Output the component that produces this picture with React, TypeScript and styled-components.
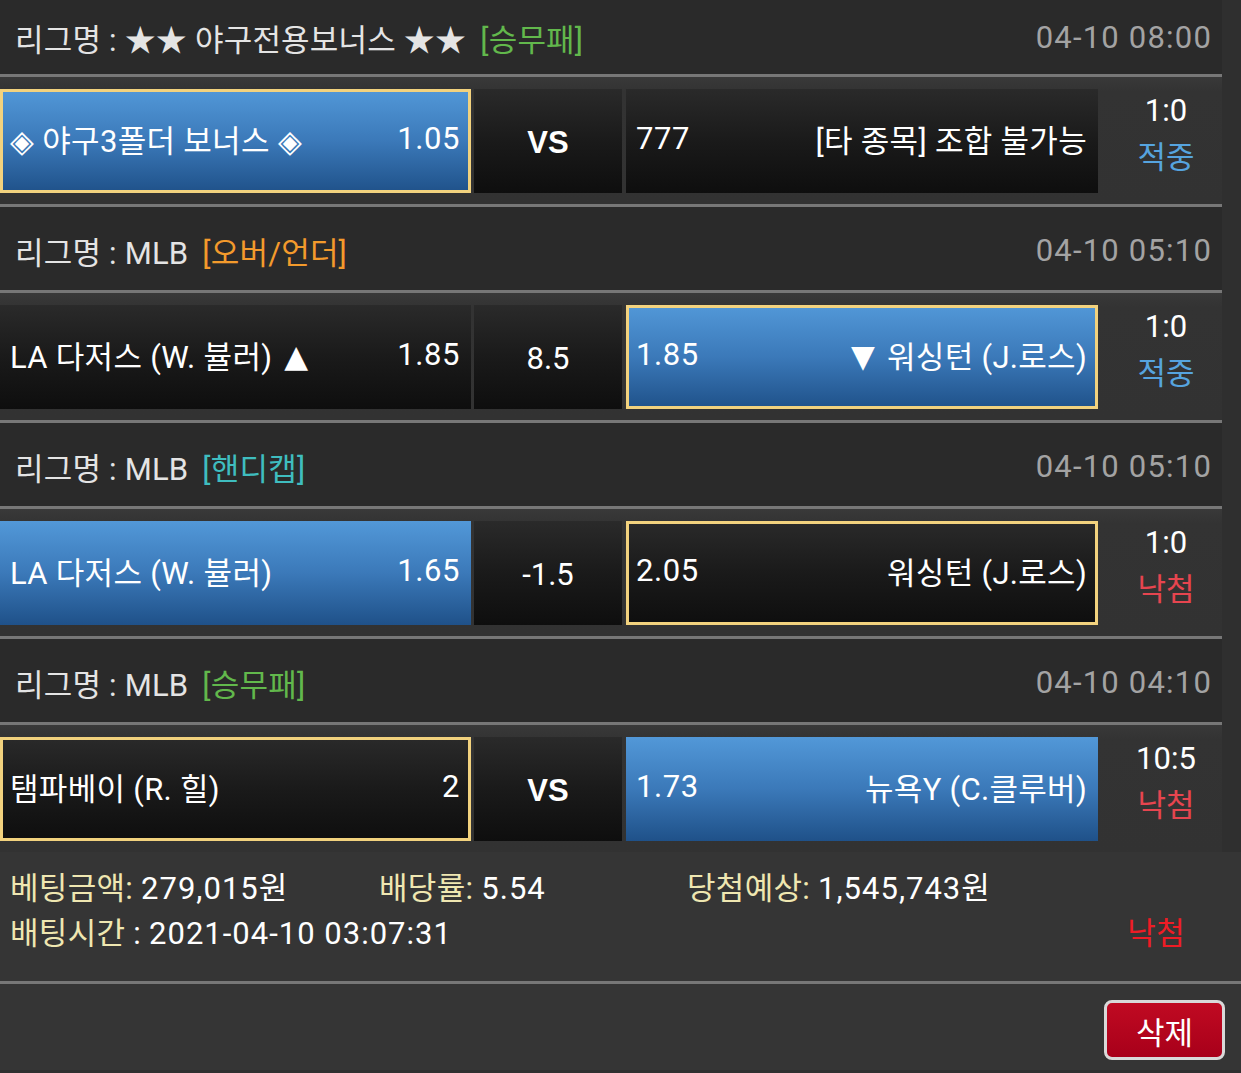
import React from "react";
import styled, { createGlobalStyle } from "styled-components";

const GlobalStyle = createGlobalStyle`
  html, body {
    margin: 0;
    padding: 0;
    background: #2f2f2f;
  }
  body {
    font-family: Roboto, "Noto Sans CJK KR", sans-serif;
    color: #ffffff;
    -webkit-font-smoothing: antialiased;
  }
`;

const Page = styled.div`
  width: 1241px;
  min-height: 1073px;
  background: #2f2f2f;
  overflow: hidden;
`;

const Board = styled.div`
  width: 1222px;
`;

const LeagueHeader = styled.div<{ $compact?: boolean }>`
  box-sizing: border-box;
  height: ${(p) => (p.$compact ? 77 : 86)}px;
  padding: ${(p) => (p.$compact ? "0" : "3px")} 10px 0 15px;
  display: flex;
  align-items: center;
  justify-content: space-between;
  background: #2a2a2a;
  border-bottom: 3px solid #777777;
  font-size: 31px;
  letter-spacing: 0.2px;
`;

const LeagueName = styled.div`
  color: #e4e4e4;
  white-space: nowrap;
`;

const Tag = styled.span<{ $color: string }>`
  color: ${(p) => p.$color};
  margin-left: 14px;
`;

const GameTime = styled.div`
  color: #a3a3a3;
  letter-spacing: 1.2px;
`;

const MatchRow = styled.div<{ $last?: boolean }>`
  box-sizing: border-box;
  height: ${(p) => (p.$last ? 127 : 130)}px;
  padding: 12px 0 11px;
  display: flex;
  background: linear-gradient(#393939 0px, #333333 14px, #323232);
  border-bottom: ${(p) => (p.$last ? "none" : "3px solid #777777")};
`;

const Cell = styled.div<{ $win?: boolean; $picked?: boolean }>`
  box-sizing: border-box;
  width: 471px;
  height: 104px;
  padding: 0 8px 5px 7px;
  display: flex;
  align-items: center;
  justify-content: space-between;
  border: 3px solid ${(p) => (p.$picked ? "#f2d27e" : "transparent")};
  background: ${(p) =>
    p.$win
      ? "linear-gradient(#5298d8, #3b79b9 50%, #1f5189)"
      : "linear-gradient(#2a2a2a, #1a1a1a 50%, #0e0e0e)"};
  background-origin: border-box;
  font-size: 31px;
  letter-spacing: 0.3px;
  white-space: nowrap;
`;

const AwayCell = styled(Cell)`
  width: 472px;
  margin-left: 4px;
`;

const Odds = styled.span`
  letter-spacing: 0.6px;
`;

const Arrow = styled.span`
  font-family: "DejaVu Sans", sans-serif;
  font-size: 31px;
  margin: 0 12px;
  position: relative;
  top: -1px;
`;

const MidCell = styled.div<{ $bold?: boolean }>`
  width: 148px;
  height: 104px;
  margin-left: 3px;
  display: flex;
  align-items: center;
  justify-content: center;
  padding-top: 3px;
  box-sizing: border-box;
  background: linear-gradient(#2a2a2a, #1a1a1a 50%, #0e0e0e);
  font-size: 31px;
  font-weight: ${(p) => (p.$bold ? 700 : 400)};
  font-family: ${(p) => (p.$bold ? '"Liberation Sans", Arial, sans-serif' : "inherit")};
`;

const ScoreBox = styled.div`
  width: 112px;
  margin-left: 12px;
  padding-bottom: 15px;
  display: flex;
  flex-direction: column;
  align-items: center;
  justify-content: center;
  font-size: 31px;
  line-height: 47px;
`;

const Result = styled.div<{ $hit: boolean }>`
  color: ${(p) => (p.$hit ? "#56a4df" : "#e6454f")};
`;

const Summary = styled.div`
  background: #353535;
  padding: 14px 10px 25px;
  border-bottom: 3px solid #777777;
  display: grid;
  grid-template-columns: 369px 308px 1fr;
  font-size: 31px;
  line-height: 45px;
  letter-spacing: 0.3px;
  white-space: nowrap;
`;

const Label = styled.span`
  color: #efe7b1;
`;

const Value = styled.span`
  letter-spacing: 1px;
`;

const TimeLine = styled.div`
  grid-column: 1 / 3;
`;

const LostMark = styled.div`
  justify-self: end;
  margin-right: 46px;
  color: #ee1c25;
`;

const Actions = styled.div`
  background: #353535;
  height: 86px;
  padding: 16px 16px 0 0;
  box-sizing: border-box;
  display: flex;
  justify-content: flex-end;
  align-items: flex-start;
`;

const DeleteButton = styled.button`
  width: 121px;
  height: 60px;
  box-sizing: border-box;
  border: 3px solid #d9d9d9;
  border-radius: 8px;
  background: linear-gradient(#c00a22, #a8001a);
  color: #ffffff;
  font-family: Roboto, "Noto Sans CJK KR", sans-serif;
  font-size: 31px;
  padding: 0;
  cursor: pointer;
`;

interface Side {
  name: string;
  odds: string;
  arrow?: "▲" | "▼";
  win?: boolean;
  picked?: boolean;
}

interface Game {
  league: string;
  tag: string;
  tagColor: string;
  time: string;
  home: Side;
  mid: string;
  midBold?: boolean;
  away: Side;
  score: string;
  hit: boolean;
}

const games: Game[] = [
  {
    league: "리그명 : ★★ 야구전용보너스 ★★",
    tag: "[승무패]",
    tagColor: "#62b84c",
    time: "04-10 08:00",
    home: { name: "◈ 야구3폴더 보너스 ◈", odds: "1.05", win: true, picked: true },
    mid: "VS",
    midBold: true,
    away: { name: "[타 종목] 조합 불가능", odds: "777" },
    score: "1:0",
    hit: true,
  },
  {
    league: "리그명 : MLB",
    tag: "[오버/언더]",
    tagColor: "#f39a2c",
    time: "04-10 05:10",
    home: { name: "LA 다저스 (W. 뷸러)", arrow: "▲", odds: "1.85" },
    mid: "8.5",
    away: { name: "워싱턴 (J.로스)", arrow: "▼", odds: "1.85", win: true, picked: true },
    score: "1:0",
    hit: true,
  },
  {
    league: "리그명 : MLB",
    tag: "[핸디캡]",
    tagColor: "#3fbdbf",
    time: "04-10 05:10",
    home: { name: "LA 다저스 (W. 뷸러)", odds: "1.65", win: true },
    mid: "-1.5",
    away: { name: "워싱턴 (J.로스)", odds: "2.05", picked: true },
    score: "1:0",
    hit: false,
  },
  {
    league: "리그명 : MLB",
    tag: "[승무패]",
    tagColor: "#62b84c",
    time: "04-10 04:10",
    home: { name: "탬파베이 (R. 힐)", odds: "2", picked: true },
    mid: "VS",
    midBold: true,
    away: { name: "뉴욕Y (C.클루버)", odds: "1.73", win: true },
    score: "10:5",
    hit: false,
  },
];

const App = (): JSX.Element => {
  return (
    <Page>
      <GlobalStyle />
      <Board>
        {games.map((g, i) => (
          <React.Fragment key={i}>
            <LeagueHeader $compact={i === 0}>
              <LeagueName>
                {g.league}
                <Tag $color={g.tagColor}>{g.tag}</Tag>
              </LeagueName>
              <GameTime>{g.time}</GameTime>
            </LeagueHeader>
            <MatchRow $last={i === games.length - 1}>
              <Cell $win={g.home.win} $picked={g.home.picked}>
                <span>
                  {g.home.name}
                  {g.home.arrow && <Arrow>{g.home.arrow}</Arrow>}
                </span>
                <Odds>{g.home.odds}</Odds>
              </Cell>
              <MidCell $bold={g.midBold}>{g.mid}</MidCell>
              <AwayCell $win={g.away.win} $picked={g.away.picked}>
                <Odds>{g.away.odds}</Odds>
                <span>
                  {g.away.arrow && <Arrow>{g.away.arrow}</Arrow>}
                  {g.away.name}
                </span>
              </AwayCell>
              <ScoreBox>
                <div>{g.score}</div>
                <Result $hit={g.hit}>{g.hit ? "적중" : "낙첨"}</Result>
              </ScoreBox>
            </MatchRow>
          </React.Fragment>
        ))}
      </Board>
      <Summary>
        <div>
          <Label>베팅금액:</Label> <Value>279,015원</Value>
        </div>
        <div>
          <Label>배당률:</Label> <Value>5.54</Value>
        </div>
        <div>
          <Label>당첨예상:</Label> <Value>1,545,743원</Value>
        </div>
        <TimeLine>
          <Label>배팅시간</Label> : <Value>2021-04-10 03:07:31</Value>
        </TimeLine>
        <LostMark>낙첨</LostMark>
      </Summary>
      <Actions>
        <DeleteButton>삭제</DeleteButton>
      </Actions>
    </Page>
  );
};

export default App;
